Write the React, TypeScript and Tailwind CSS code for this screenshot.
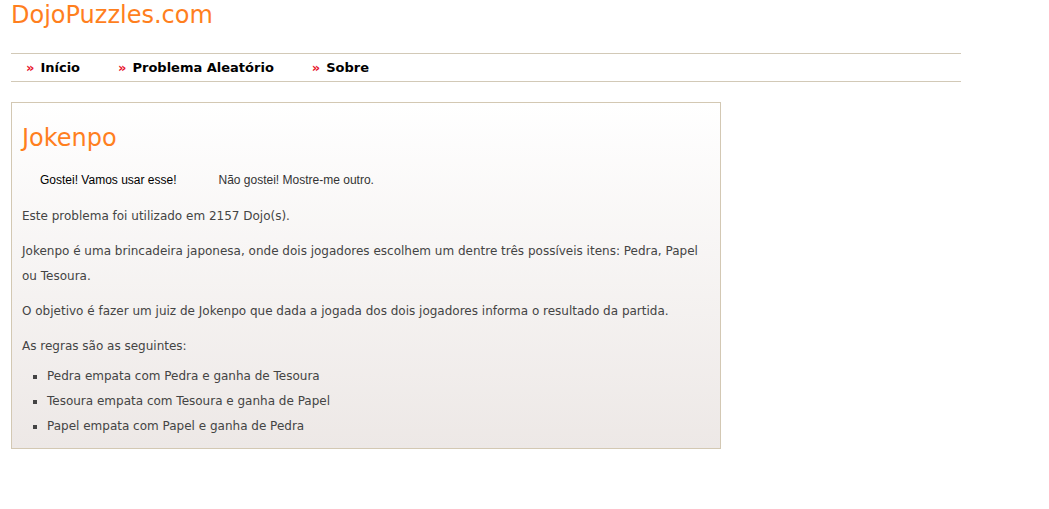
export default function App() {
  const rules = [
    "Pedra empata com Pedra e ganha de Tesoura",
    "Tesoura empata com Tesoura e ganha de Papel",
    "Papel empata com Papel e ganha de Pedra",
  ];
  const nav = ["Início", "Problema Aleatório", "Sobre"];

  return (
    <div className="min-h-[509px] bg-white px-[11px] font-['DejaVu_Sans',sans-serif]">
      <h1 className="pt-[1px] text-[24px] leading-[28px] text-[#ff7f1e]">DojoPuzzles.com</h1>

      <nav className="mt-[24px] w-[950px] border-y border-[#d2c9b7]">
        <ul className="flex h-[27px] items-center pl-[15px]">
          {nav.map((item) => (
            <li key={item} className="mr-[38px] flex items-center">
              <span className="mr-[6px] text-[13px] font-bold leading-none text-[#e8102a]">»</span>
              <span className="text-[13px] font-bold text-black">{item}</span>
            </li>
          ))}
        </ul>
      </nav>

      <div className="mt-[20px] w-[710px] border border-[#d3c8b3] bg-gradient-to-b from-white to-[#ede8e6] px-[10px] pb-[9px] pt-[17px]">
        <h2 className="text-[24px] leading-[36px] text-[#ff7f1e]">Jokenpo</h2>

        <div className="mt-[14px] flex pl-[12px] font-['Liberation_Sans',sans-serif] text-[12px]">
          <button className="px-[6px] py-[1px] text-black">Gostei! Vamos usar esse!</button>
          <button className="ml-[30px] px-[6px] py-[1px] text-[#333]">Não gostei! Mostre-me outro.</button>
        </div>

        <div className="mt-[14px] text-[12px] leading-[25px] text-[#444]">
          <p>Este problema foi utilizado em 2157 Dojo(s).</p>
          <p className="mt-[10px]">
            Jokenpo é uma brincadeira japonesa, onde dois jogadores escolhem um dentre três possíveis itens: Pedra, Papel ou Tesoura.
          </p>
          <p className="mt-[10px]">
            O objetivo é fazer um juiz de Jokenpo que dada a jogada dos dois jogadores informa o resultado da partida.
          </p>
          <p className="mt-[10px]">As regras são as seguintes:</p>
          <ul className="mt-[5px] list-[square] pl-[25px] marker:text-[#444]">
            {rules.map((r) => (
              <li key={r}>{r}</li>
            ))}
          </ul>
        </div>
      </div>
    </div>
  );
}
